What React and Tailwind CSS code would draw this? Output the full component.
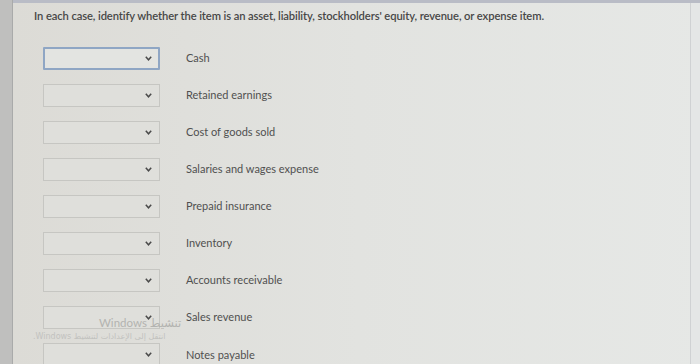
import React from "react";

const items = [
  "Cash",
  "Retained earnings",
  "Cost of goods sold",
  "Salaries and wages expense",
  "Prepaid insurance",
  "Inventory",
  "Accounts receivable",
  "Sales revenue",
  "Notes payable",
];

function Chevron() {
  return (
    <svg width="7" height="5" viewBox="0 0 7 5" className="shrink-0">
      <path d="M0.8 0.8 L3.5 3.8 L6.2 0.8" fill="none" stroke="#4a4a4a" strokeWidth="1.5" />
    </svg>
  );
}

export default function App() {
  return (
    <div
      className="w-[700px] h-[364px] overflow-hidden flex bg-[#c9c9c6]"
      style={{ fontFamily: "Lato, 'Open Sans', sans-serif" }}
    >
      <div className="w-[13px] shrink-0 bg-[#bfbfbe] border-r border-[#a9aaaa]" />
      <div className="flex-1 flex flex-col bg-gradient-to-r from-[#dcdbd6] via-[#e2e3e0] to-[#e6e8e6] border-t-[3px] border-[#b9bcc6] relative">
        <div className="pl-[21px] pt-[6px] text-[11.2px] font-semibold text-[#474747] tracking-[-0.1px] leading-[14px]">
          In each case, identify whether the item is an asset, liability, stockholders' equity, revenue, or expense item.
        </div>
        <div className="flex flex-col pl-[30px] pt-[24px] gap-[15.1px]">
          {items.map((t, i) => (
            <div key={t} className="flex items-center h-[22px]">
              <div
                className={
                  i === 0
                    ? "w-[117px] h-[23px] border-2 border-[#8fa6c4] bg-[#e3e4e1] flex items-center justify-end pr-[6px] rounded-[1px]"
                    : "w-[117px] h-[23px] border border-[#c6c6c2] bg-[#dfdfdb] flex items-center justify-end pr-[7px]"
                }
              >
                <Chevron />
              </div>
              <div className="ml-[26px] text-[11px] text-[#505050]">{t}</div>
            </div>
          ))}
        </div>
        <div className="absolute left-[86px] top-[314px] text-[11.5px] text-[#b3b3b0] leading-none pointer-events-none">
          Windows <span style={{ fontFamily: "'DejaVu Sans', sans-serif" }}>تنشيط</span>
        </div>
        <div
          className="absolute left-[20px] top-[330px] text-[8px] text-[#c2c2bf] leading-none pointer-events-none"
          style={{ fontFamily: "'DejaVu Sans', sans-serif" }}
        >
          .Windows انتقل إلى الإعدادات لتنشيط
        </div>
        <div className="absolute right-0 top-0 bottom-0 w-[10px] bg-[#e4e6e6] border-l border-[#cfd1d3]" />
      </div>
    </div>
  );
}
